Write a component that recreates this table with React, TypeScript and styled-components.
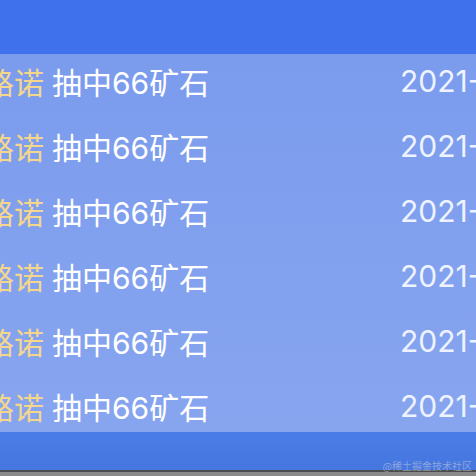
import React from "react";
import styled, { createGlobalStyle } from "styled-components";

const GlobalStyle = createGlobalStyle`
  html, body {
    margin: 0;
    padding: 0;
    overflow: hidden;
    background: #8a8a8a;
  }
  * { box-sizing: border-box; }
`;

const Page = styled.div`
  width: 476px;
  height: 476px;
  display: flex;
  flex-direction: column;
  position: relative;
  overflow: hidden;
  font-family: Inter, "Noto Sans CJK SC", sans-serif;
`;

const TopBar = styled.div`
  height: 54px;
  flex: none;
  background: #3f71ec;
`;

const List = styled.div`
  height: 378px;
  flex: none;
  overflow: hidden;
  background: linear-gradient(180deg, #7b9bed 0%, #87a5ef 100%);
`;

const Row = styled.div`
  height: 65px;
  display: grid;
  grid-template-columns: 416px auto;
  align-items: center;
  margin-left: -16px;
  width: 720px;
  font-size: 30px;
  white-space: nowrap;
  padding-bottom: 11px;
`;

const Message = styled.div`
  color: #ffffff;
`;

const Name = styled.span`
  color: #f4d78c;
  margin-right: 8px;
`;

const DateText = styled.div`
  color: #eef3ff;
`;

const BottomBar = styled.div`
  height: 38px;
  flex: none;
  background: linear-gradient(180deg, #4b7de8 0%, #4676df 100%);
`;

const Footer = styled.div`
  flex: 1;
  border-top: 2px solid #4c4c4c;
  background: #8a8a8a;
`;

const Watermark = styled.div`
  position: absolute;
  right: 4px;
  bottom: 5px;
  font-family: "Noto Sans CJK SC", sans-serif;
  font-size: 10px;
  line-height: 10px;
  color: rgba(190, 198, 215, 0.6);
`;

const rows = Array.from({ length: 6 }, (_, i) => ({
  id: i,
  name: "路诺",
  text: "抽中66矿石",
  date: "2021-12-10 12:00",
}));

export default function App() {
  return (
    <>
      <GlobalStyle />
      <Page>
        <TopBar />
        <List>
          {rows.map((r) => (
            <Row key={r.id}>
              <Message>
                <Name>{r.name}</Name>
                {r.text}
              </Message>
              <DateText>{r.date}</DateText>
            </Row>
          ))}
        </List>
        <BottomBar />
        <Footer />
        <Watermark>@稀土掘金技术社区</Watermark>
      </Page>
    </>
  );
}
